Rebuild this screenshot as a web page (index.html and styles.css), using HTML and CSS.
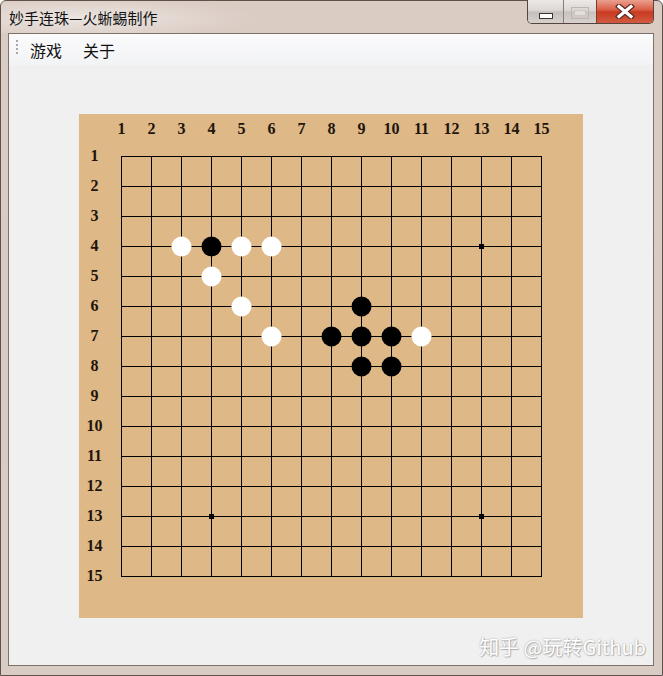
FILE: index.html
```html
<!DOCTYPE html>
<html>
<head>
    <meta charset="UTF-8">
    <title>妙手连珠—火蜥蜴制作</title>
    <link rel="stylesheet" href="styles.css">
</head>
<body>
<div class="window">
    <div class="titlebar">
        <span class="title">妙手连珠—火蜥蜴制作</span>
        <div class="caption">
            <div class="cbtn cbtn-min">
                <svg width="14" height="6" viewBox="0 0 14 6"><rect x="0.5" y="0.5" width="13" height="5" fill="#fff" stroke="#3c3430"/></svg>
            </div>
            <div class="cbtn cbtn-max">
                <svg width="18" height="12" viewBox="0 0 18 12"><rect x="0.5" y="0.5" width="17" height="11" fill="none" stroke="#bfb6b2"/><rect x="3.5" y="3.5" width="11" height="5" fill="#e4dedb" stroke="#cfc7c3"/></svg>
            </div>
            <div class="cbtn cbtn-close">
                <svg width="20" height="15" viewBox="0 0 20 15">
                    <path d="M4 2.5L16 12.5M16 2.5L4 12.5" stroke="#5a2a22" stroke-width="5.6" stroke-linecap="square"/>
                    <path d="M4 2.5L16 12.5M16 2.5L4 12.5" stroke="#fff" stroke-width="3.2" stroke-linecap="square"/>
                </svg>
            </div>
        </div>
    </div>
    <div class="client">
        <div class="menubar">
            <span class="grip"></span>
            <span class="menu-item">游戏</span>
            <span class="menu-item">关于</span>
        </div>
        <div class="content">
            <svg class="board" width="504" height="504" viewBox="0 0 504 504">
                <rect width="504" height="504" fill="#deb887"/>
                <path class="grid" d="M42.5 42V463M72.5 42V463M102.5 42V463M132.5 42V463M162.5 42V463M192.5 42V463M222.5 42V463M252.5 42V463M282.5 42V463M312.5 42V463M342.5 42V463M372.5 42V463M402.5 42V463M432.5 42V463M462.5 42V463M42 42.5H463M42 72.5H463M42 102.5H463M42 132.5H463M42 162.5H463M42 192.5H463M42 222.5H463M42 252.5H463M42 282.5H463M42 312.5H463M42 342.5H463M42 372.5H463M42 402.5H463M42 432.5H463M42 462.5H463"/>
                <g class="col-labels">
                    <text x="42.5" y="20">1</text>
                    <text x="72.5" y="20">2</text>
                    <text x="102.5" y="20">3</text>
                    <text x="132.5" y="20">4</text>
                    <text x="162.5" y="20">5</text>
                    <text x="192.5" y="20">6</text>
                    <text x="222.5" y="20">7</text>
                    <text x="252.5" y="20">8</text>
                    <text x="282.5" y="20">9</text>
                    <text x="312.5" y="20">10</text>
                    <text x="342.5" y="20">11</text>
                    <text x="372.5" y="20">12</text>
                    <text x="402.5" y="20">13</text>
                    <text x="432.5" y="20">14</text>
                    <text x="462.5" y="20">15</text>
                </g>
                <g class="row-labels">
                    <text x="15.5" y="47">1</text>
                    <text x="15.5" y="77">2</text>
                    <text x="15.5" y="107">3</text>
                    <text x="15.5" y="137">4</text>
                    <text x="15.5" y="167">5</text>
                    <text x="15.5" y="197">6</text>
                    <text x="15.5" y="227">7</text>
                    <text x="15.5" y="257">8</text>
                    <text x="15.5" y="287">9</text>
                    <text x="15.5" y="317">10</text>
                    <text x="15.5" y="347">11</text>
                    <text x="15.5" y="377">12</text>
                    <text x="15.5" y="407">13</text>
                    <text x="15.5" y="437">14</text>
                    <text x="15.5" y="467">15</text>
                </g>
                <g class="stars">
                    <rect x="400" y="130" width="5" height="5"/>
                    <rect x="130" y="400" width="5" height="5"/>
                    <rect x="400" y="400" width="5" height="5"/>
                </g>
                <g class="white">
                    <circle cx="102.5" cy="132.5" r="10"/>
                    <circle cx="162.5" cy="132.5" r="10"/>
                    <circle cx="192.5" cy="132.5" r="10"/>
                    <circle cx="132.5" cy="162.5" r="10"/>
                    <circle cx="162.5" cy="192.5" r="10"/>
                    <circle cx="192.5" cy="222.5" r="10"/>
                    <circle cx="342.5" cy="222.5" r="10"/>
                </g>
                <g class="black">
                    <circle cx="132.5" cy="132.5" r="10"/>
                    <circle cx="282.5" cy="192.5" r="10"/>
                    <circle cx="252.5" cy="222.5" r="10"/>
                    <circle cx="282.5" cy="222.5" r="10"/>
                    <circle cx="312.5" cy="222.5" r="10"/>
                    <circle cx="282.5" cy="252.5" r="10"/>
                    <circle cx="312.5" cy="252.5" r="10"/>
                </g>
            </svg>
        </div>
    </div>
    <div class="watermark">知乎 @玩转Github</div>
</div>
</body>
</html>
```

FILE: styles.css
```css
* {
    margin: 0;
    padding: 0;
    box-sizing: border-box;
}

html, body {
    width: 100%;
    height: 100%;
    background: #fff;
}

.window {
    position: relative;
    display: flex;
    flex-direction: column;
    width: 663px;
    height: 676px;
    border: 1px solid #5f524c;
    border-radius: 6px 6px 0 0;
    background: linear-gradient(to bottom, #dacbc3, #d9ccc4);
    font-family: "Noto Sans CJK SC", "Liberation Sans", sans-serif;
}

/* 标题栏 */
.titlebar {
    display: flex;
    justify-content: space-between;
    align-items: flex-start;
    height: 32px;
    padding: 0 8px 0 8px;
    background: radial-gradient(ellipse 180px 22px at 80px 17px, #ebe4e0, rgba(235, 228, 224, 0));
}

.title {
    margin-top: 7px;
    font-size: 15px;
    line-height: 20px;
    color: #111;
}

.caption {
    display: flex;
    height: 24px;
    margin-top: -1px;
    border: 1px solid #54463f;
    border-top: none;
    border-radius: 0 0 5px 5px;
    overflow: hidden;
}

.cbtn {
    display: flex;
    justify-content: center;
    height: 100%;
}

.cbtn svg {
    display: block;
}

.cbtn-min {
    width: 35px;
    padding-top: 13px;
    background: linear-gradient(to bottom, #ece9e7 0%, #dcd7d4 45%, #c6bfbb 52%, #d6d0cc 100%);
}

.cbtn-max {
    width: 33px;
    padding-top: 7px;
    border-left: 1px solid #8a7d77;
    background: linear-gradient(to bottom, #ece9e7 0%, #dcd7d4 45%, #c9c2be 52%, #d8d2ce 100%);
}

.cbtn-close {
    width: 57px;
    padding-top: 4px;
    border-left: 1px solid #7a3a2e;
    background: linear-gradient(to bottom, #eaa08f 0%, #dc5f47 42%, #c93a22 52%, #d25a41 100%);
}

/* 客户区 */
.client {
    display: flex;
    flex-direction: column;
    flex: 1;
    margin: 0 8px 9px 7px;
    border: 1px solid #7d716b;
    background: #f0f0f0;
}

.menubar {
    display: flex;
    align-items: center;
    height: 31px;
    padding-left: 7px;
    background: linear-gradient(to bottom, #fbfbfc, #f2f3f5);
}

.grip {
    width: 2px;
    height: 15px;
    margin-top: -4px;
    margin-right: 12px;
    background: repeating-linear-gradient(to bottom, #a8a8a8 0, #a8a8a8 2px, transparent 2px, transparent 4px);
}

.menu-item {
    margin-right: 21px;
    font-size: 16px;
    line-height: 20px;
    color: #111;
}

.content {
    padding: 49px 0 0 70px;
}

.board {
    display: block;
}

.board .grid {
    stroke: #000;
    stroke-width: 1;
    fill: none;
    shape-rendering: crispEdges;
}

.board text {
    font-family: "Liberation Serif", serif;
    font-weight: bold;
    font-size: 16px;
    fill: #21140a;
    text-anchor: middle;
}

.board .stars rect {
    fill: #000;
}

.board .white circle {
    fill: #fff;
}

.board .black circle {
    fill: #000;
}

.watermark {
    position: absolute;
    right: 16px;
    bottom: 16px;
    font-size: 20px;
    line-height: 24px;
    color: #fff;
    text-shadow: 0 0 2px rgba(0, 0, 0, .35), 1px 1px 1px rgba(0, 0, 0, .2);
}
```
